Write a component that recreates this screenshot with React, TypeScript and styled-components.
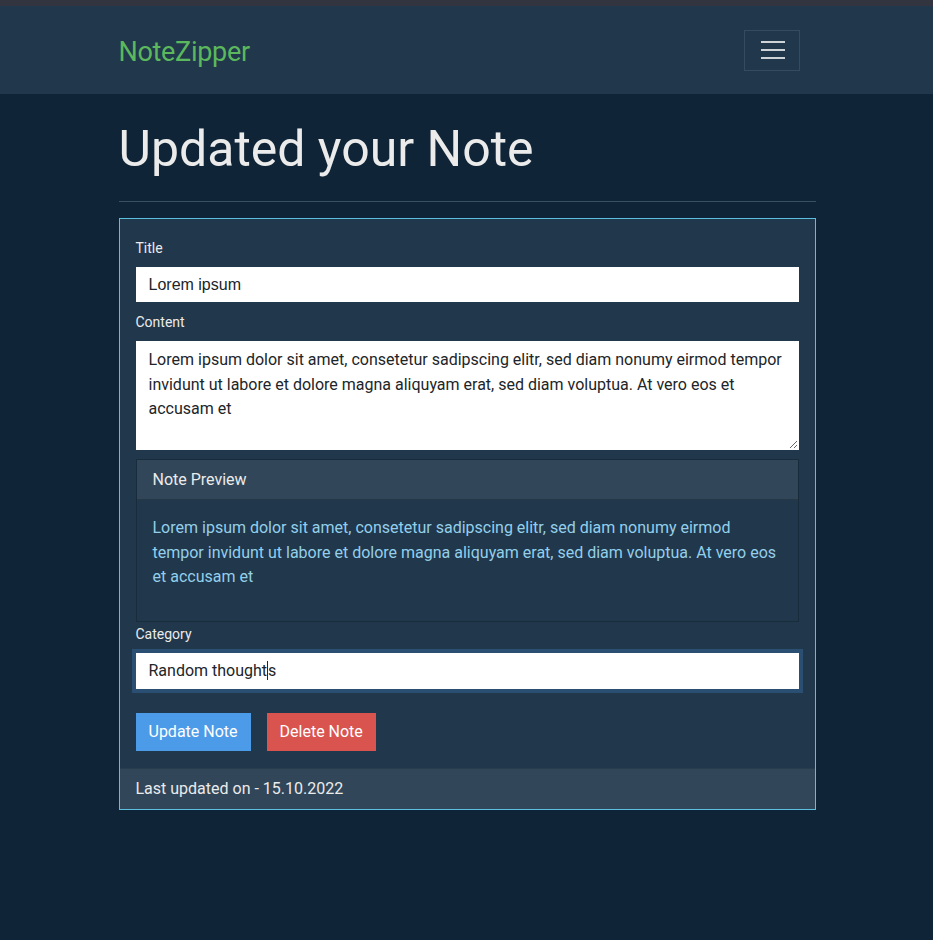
import React from "react";
import styled, { createGlobalStyle } from "styled-components";

const GlobalStyle = createGlobalStyle`
  html, body {
    margin: 0;
    padding: 0;
    background: #0f2537;
    color: #ebebeb;
    font-family: Roboto, "Liberation Sans", Arial, sans-serif;
    font-size: 16px;
  }
  * { box-sizing: border-box; }
`;

const Page = styled.div`
  min-height: 940px;
  background: #0f2537;
`;

const TopStrip = styled.div`
  height: 6px;
  background: #32353f;
`;

const Navbar = styled.nav`
  height: 88px;
  background: #20374c;
  display: flex;
  align-items: center;
`;

const Container = styled.div`
  width: 100%;
  max-width: 721px;
  margin: 0 auto;
  padding: 0 11.5px 0 12.5px;
`;

const NavInner = styled(Container)`
  display: flex;
  align-items: center;
  justify-content: space-between;
`;

const Brand = styled.a`
  color: #5cb85c;
  font-size: 27px;
  line-height: 34px;
  padding-top: 3px;
  text-decoration: none;
  letter-spacing: -0.3px;
`;

const Toggler = styled.button`
  width: 56px;
  height: 41px;
  margin-right: 16px;
  padding: 0;
  background: transparent;
  border: 1px solid rgba(255, 255, 255, 0.1);
  border-radius: 0;
  display: flex;
  align-items: center;
  justify-content: center;
  cursor: pointer;
`;

const Heading = styled.h1`
  margin: 25px 0 22px;
  font-size: 50px;
  line-height: 60px;
  font-weight: 400;
  color: #ebebeb;
`;

const Rule = styled.hr`
  margin: 0 0 16px;
  border: 0;
  border-top: 1px solid #3a5063;
`;

const Card = styled.div`
  background: #20374c;
  border: 1px solid #5bc0de;
`;

const CardBody = styled.div`
  padding: 19px 16px 17px;
`;

const Label = styled.label`
  display: block;
  font-size: 14px;
  line-height: 21px;
  margin-bottom: 8px;
  color: #ebebeb;
`;

const Group = styled.div<{ $gap: number }>`
  margin-bottom: ${(p) => p.$gap}px;
`;

const TextInput = styled.input`
  display: block;
  width: 100%;
  height: 35px;
  padding: 0 12px;
  border: 1px solid #fff;
  border-radius: 0;
  background: #fff;
  color: #212529;
  font-family: "Liberation Sans", Arial, sans-serif;
  font-size: 16px;
  outline: none;
`;

const TextArea = styled.textarea`
  display: block;
  width: 100%;
  height: 109px;
  padding: 6px 12px;
  border: 1px solid #fff;
  border-radius: 0;
  background: #fff;
  color: #212529;
  font-family: Roboto, sans-serif;
  font-size: 16px;
  line-height: 24.5px;
  resize: vertical;
  outline: none;
`;

const FocusedField = styled.div`
  height: 36px;
  padding: 0 12px;
  background: #fff;
  border: 1px solid #fff;
  box-shadow: 0 0 0 4px #2b4f72;
  color: #212529;
  font-size: 16px;
  line-height: 33px;
  white-space: nowrap;
`;

const Caret = styled.span`
  display: inline-block;
  width: 1px;
  height: 19px;
  background: #212529;
  vertical-align: -4px;
`;

const PreviewCard = styled.div`
  border: 1px solid rgba(0, 0, 0, 0.2);
  background: #20374c;
`;

const PreviewHeader = styled.div`
  padding: 8px 16px 7px;
  line-height: 24px;
  font-size: 16px;
  background: #314659;
  border-bottom: 1px solid rgba(0, 0, 0, 0.2);
  color: #ebebeb;
`;

const PreviewBody = styled.div`
  padding: 16px 16px 15px;
`;

const PreviewText = styled.p`
  margin: 0 0 16px;
  font-size: 16px;
  line-height: 24.5px;
  color: #94cfea;
`;

const ButtonRow = styled.div`
  display: flex;
  gap: 16px;
  margin-top: 24px;
`;

const Button = styled.button<{ $variant: "primary" | "danger" }>`
  height: 38px;
  padding: 0 13px;
  border: 0;
  border-radius: 0;
  background: ${(p) => (p.$variant === "primary" ? "#4c9be8" : "#d9534f")};
  color: #fff;
  font-family: Roboto, sans-serif;
  font-size: 16px;
  line-height: 38px;
  cursor: pointer;
`;

const CardFooter = styled.div`
  padding: 8px 16px;
  line-height: 24px;
  font-size: 16px;
  background: #314659;
  border-top: 1px solid rgba(0, 0, 0, 0.125);
  color: #ebebeb;
`;

const content =
  "Lorem ipsum dolor sit amet, consetetur sadipscing elitr, sed diam nonumy eirmod tempor invidunt ut labore et dolore magna aliquyam erat, sed diam voluptua. At vero eos et accusam et";

function HamburgerIcon() {
  return (
    <svg width="30" height="30" viewBox="0 0 30 30" aria-hidden="true">
      <path
        d="M4 7h24M4 15h24M4 23h24"
        stroke="rgba(255,255,255,0.78)"
        strokeWidth="2"
        strokeLinecap="butt"
      />
    </svg>
  );
}

export default function App() {
  return (
    <Page>
      <GlobalStyle />
      <TopStrip />
      <Navbar>
        <NavInner>
          <Brand href="#">NoteZipper</Brand>
          <Toggler aria-label="Toggle navigation">
            <HamburgerIcon />
          </Toggler>
        </NavInner>
      </Navbar>
      <Container>
        <Heading>Updated your Note</Heading>
        <Rule />
        <Card>
          <CardBody>
            <Group $gap={10}>
              <Label htmlFor="title">Title</Label>
              <TextInput id="title" type="title" defaultValue="Lorem ipsum" />
            </Group>
            <Group $gap={9}>
              <Label htmlFor="content">Content</Label>
              <TextArea id="content" rows={4} defaultValue={content} />
            </Group>
            <Group $gap={2}>
              <PreviewCard>
                <PreviewHeader>Note Preview</PreviewHeader>
                <PreviewBody>
                  <PreviewText>{content}</PreviewText>
                </PreviewBody>
              </PreviewCard>
            </Group>
            <Group $gap={0}>
              <Label>Category</Label>
              <FocusedField role="textbox">
                Random thought
                <Caret />s
              </FocusedField>
            </Group>
            <ButtonRow>
              <Button $variant="primary">Update Note</Button>
              <Button $variant="danger">Delete Note</Button>
            </ButtonRow>
          </CardBody>
          <CardFooter>Last updated on - 15.10.2022</CardFooter>
        </Card>
      </Container>
    </Page>
  );
}
